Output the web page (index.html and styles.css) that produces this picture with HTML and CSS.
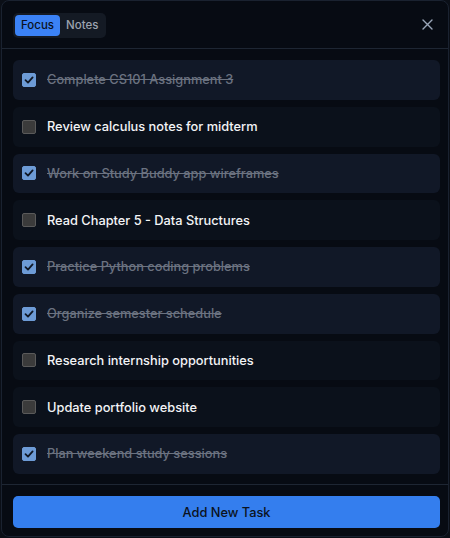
FILE: index.html
```html
<!DOCTYPE html>
<html lang="en">
  <head>
    <meta charset="UTF-8" />
    <meta name="viewport" content="width=device-width, initial-scale=1.0" />
    <title>Study Buddy - Focus</title>
    <link rel="stylesheet" href="styles.css">
  </head>
  <body>
    <div class="dialog">
      <div class="dialog-header">
        <div class="tabs">
          <button class="tab tab-active">Focus</button>
          <button class="tab">Notes</button>
        </div>
        <button class="close-btn" aria-label="Close">
          <svg width="11" height="11" viewBox="0 0 11 11"><path d="M1 1L10 10M10 1L1 10" stroke="#9aa6b8" stroke-width="1.4" stroke-linecap="round"/></svg>
        </button>
      </div>

      <ul class="task-list">
        <li class="task done"><span class="check"></span><span class="task-text">Complete CS101 Assignment 3</span></li>
        <li class="task"><span class="check"></span><span class="task-text">Review calculus notes for midterm</span></li>
        <li class="task done"><span class="check"></span><span class="task-text">Work on Study Buddy app wireframes</span></li>
        <li class="task"><span class="check"></span><span class="task-text">Read Chapter 5 - Data Structures</span></li>
        <li class="task done"><span class="check"></span><span class="task-text">Practice Python coding problems</span></li>
        <li class="task done"><span class="check"></span><span class="task-text">Organize semester schedule</span></li>
        <li class="task"><span class="check"></span><span class="task-text">Research internship opportunities</span></li>
        <li class="task"><span class="check"></span><span class="task-text">Update portfolio website</span></li>
        <li class="task done"><span class="check"></span><span class="task-text">Plan weekend study sessions</span></li>
      </ul>

      <div class="dialog-footer">
        <button class="add-btn">Add New Task</button>
      </div>
    </div>
  </body>
</html>
```

FILE: styles.css
```css
body {
  margin: 0;
  background: #0b0f17;
  font-family: Inter, "Noto Sans", sans-serif;
}

.dialog {
  margin: 0 1px;
  height: 537px;
  box-sizing: border-box;
  background: #070b13;
  border: 1px solid #1a2230;
  border-radius: 8px;
  display: flex;
  flex-direction: column;
}

.dialog-header {
  height: 47px;
  display: flex;
  align-items: center;
  justify-content: space-between;
  padding: 0 11px;
  border-bottom: 1px solid #1e2633;
}

.tabs {
  display: flex;
  background: #141a24;
  border-radius: 5px;
  padding: 2px;
  margin-top: 1px;
}

.tab {
  border: none;
  background: none;
  font-family: inherit;
  font-size: 11.5px;
  font-weight: 500;
  color: #9ca3af;
  padding: 0 6px;
  height: 21px;
  border-radius: 4px;
}

.tab-active {
  background: #3b82f6;
  color: #0b1220;
}

.close-btn {
  border: none;
  background: none;
  padding: 0;
  width: 20px;
  height: 20px;
  display: flex;
  align-items: center;
  justify-content: center;
}

.task-list {
  list-style: none;
  margin: 0;
  padding: 11px 8px 0 11px;
  display: flex;
  flex-direction: column;
  gap: 7px;
  flex: 1;
}

.task {
  height: 39.75px;
  display: flex;
  align-items: center;
  gap: 11px;
  padding: 0 9px;
  background: #0b111b;
  border-radius: 6px;
  font-size: 12.8px;
  font-weight: 450;
  color: #f3f4f6;
}

.task.done {
  background: #111827;
}

.done .task-text {
  color: #6b7280;
  text-decoration: line-through;
}

.check {
  width: 12px;
  height: 12px;
  border: 1px solid #5a5a5a;
  border-radius: 2px;
  background: #3b3b3b;
  flex-shrink: 0;
}

.done .check {
  border-color: #6d9bd6;
  background: #6d9bd6 url("data:image/svg+xml;utf8,<svg xmlns='http://www.w3.org/2000/svg' width='12' height='12' viewBox='0 0 12 12'><path d='M2.5 6.2L5 8.6L9.6 3.4' fill='none' stroke='%23101826' stroke-width='1.8' stroke-linecap='round' stroke-linejoin='round'/></svg>") center / 12px no-repeat;
}

.dialog-footer {
  border-top: 1px solid #1e2633;
  padding: 11px 8px 8px 11px;
}

.add-btn {
  width: 100%;
  height: 32px;
  border: none;
  border-radius: 5px;
  background: #347eee;
  color: #0b1220;
  font-family: inherit;
  font-size: 12.8px;
  font-weight: 500;
}
```
